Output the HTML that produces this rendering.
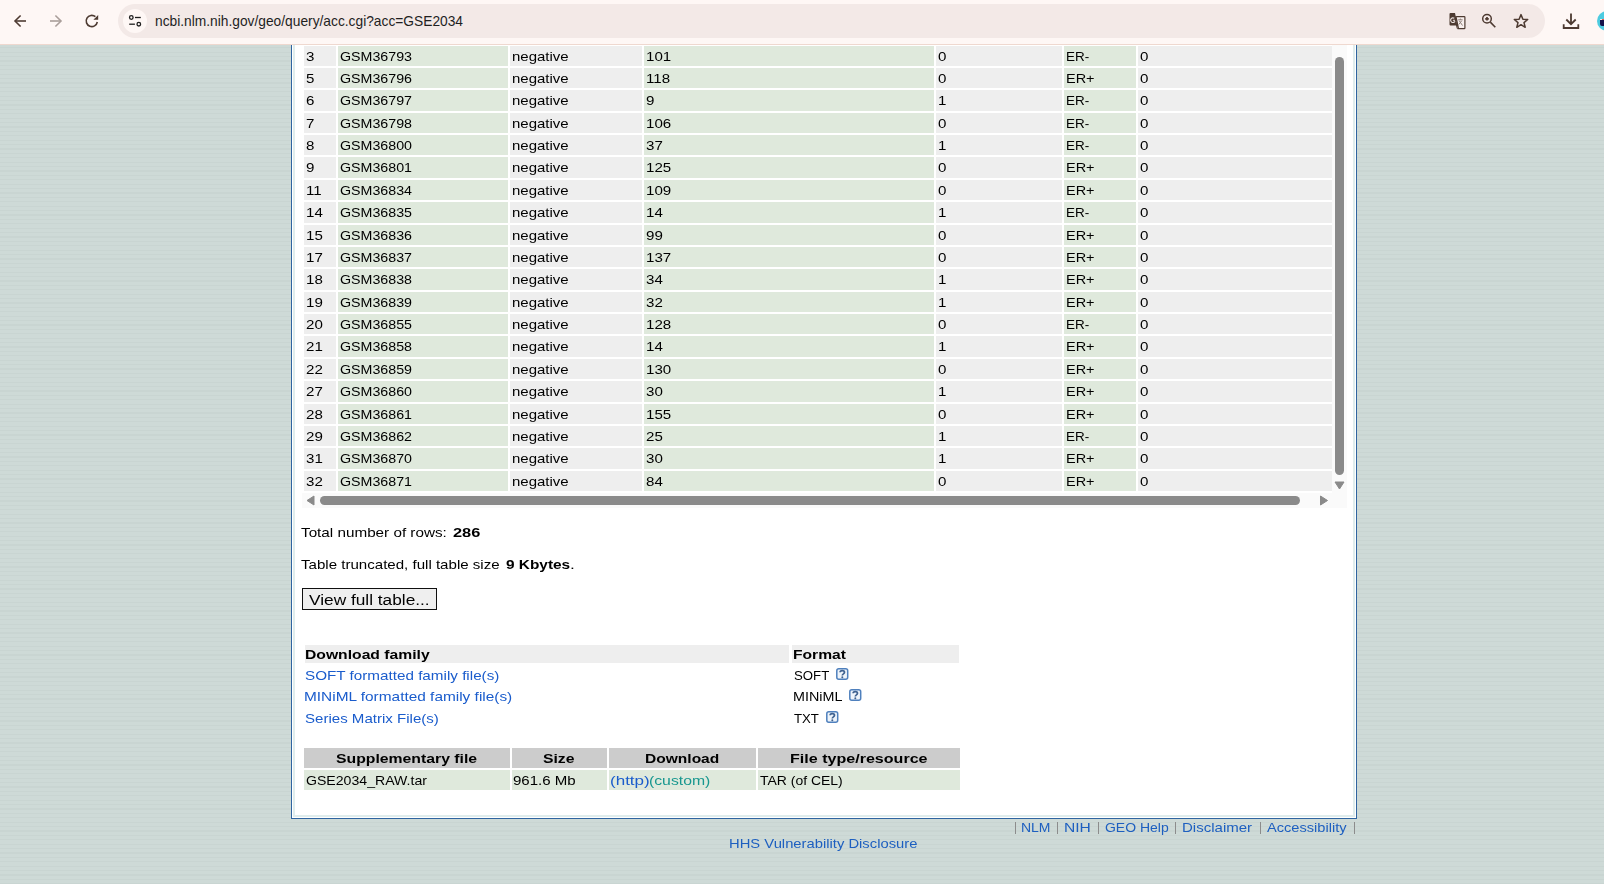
<!DOCTYPE html>
<html><head><meta charset="utf-8"><style>
html,body{margin:0;padding:0;width:1604px;height:884px;overflow:hidden;}
body{position:relative;background-color:#ccd8d5;background-image:repeating-linear-gradient(to bottom,#cedad7 0px,#cedad7 3.1px,#c9d5d2 3.1px,#c9d5d2 4.4px);font-family:"Liberation Sans",sans-serif;}
div,span,svg{position:absolute;}
.t{white-space:pre;line-height:20px;transform-origin:0 0;font-family:"Liberation Sans",sans-serif;}
</style></head><body>
<div style="left:0;top:0;width:1604px;height:884px;will-change:transform"><div style="left:291px;top:45px;width:1066px;height:774px;background:#2f64a0;"></div>
<div style="left:292px;top:45px;width:1064px;height:773px;background:#ffffff;"></div>
<div style="left:293px;top:45px;width:1062px;height:772px;background:#e0eded;"></div>
<div style="left:295px;top:45px;width:1058px;height:770px;background:#ffffff;"></div>
<div style="left:302px;top:45px;width:1045px;height:463px;background:#fafafa;"></div>
<div style="left:302px;top:45px;width:1030px;height:448px;background:#ffffff;"></div>
<div style="left:304px;top:46px;width:32px;height:20px;background:#eeeeee;"></div>
<div style="left:338px;top:46px;width:170px;height:20px;background:#dfe9dc;"></div>
<div style="left:510px;top:46px;width:132px;height:20px;background:#eeeeee;"></div>
<div style="left:644px;top:46px;width:290px;height:20px;background:#dfe9dc;"></div>
<div style="left:936px;top:46px;width:126px;height:20px;background:#eeeeee;"></div>
<div style="left:1064px;top:46px;width:72px;height:20px;background:#dfe9dc;"></div>
<div style="left:1138px;top:46px;width:194px;height:20px;background:#eeeeee;"></div>
<span class="t" style="left:306.40px;top:47px;font-size:13.5px;transform:scaleX(1.1177);color:#000;">3</span>
<span class="t" style="left:340.40px;top:47px;font-size:13.5px;transform:scaleX(1.0547);color:#000;">GSM36793</span>
<span class="t" style="left:512.40px;top:47px;font-size:13.5px;transform:scaleX(1.1096);color:#000;">negative</span>
<span class="t" style="left:646.40px;top:47px;font-size:13.5px;transform:scaleX(1.1177);color:#000;">101</span>
<span class="t" style="left:938.40px;top:47px;font-size:13.5px;transform:scaleX(1.1177);color:#000;">0</span>
<span class="t" style="left:1066.40px;top:47px;font-size:13.5px;transform:scaleX(0.9991);color:#000;">ER-</span>
<span class="t" style="left:1140.40px;top:47px;font-size:13.5px;transform:scaleX(1.1177);color:#000;">0</span>
<div style="left:304px;top:68px;width:32px;height:20px;background:#eeeeee;"></div>
<div style="left:338px;top:68px;width:170px;height:20px;background:#dfe9dc;"></div>
<div style="left:510px;top:68px;width:132px;height:20px;background:#eeeeee;"></div>
<div style="left:644px;top:68px;width:290px;height:20px;background:#dfe9dc;"></div>
<div style="left:936px;top:68px;width:126px;height:20px;background:#eeeeee;"></div>
<div style="left:1064px;top:68px;width:72px;height:20px;background:#dfe9dc;"></div>
<div style="left:1138px;top:68px;width:194px;height:20px;background:#eeeeee;"></div>
<span class="t" style="left:306.40px;top:69px;font-size:13.5px;transform:scaleX(1.1177);color:#000;">5</span>
<span class="t" style="left:340.40px;top:69px;font-size:13.5px;transform:scaleX(1.0547);color:#000;">GSM36796</span>
<span class="t" style="left:512.40px;top:69px;font-size:13.5px;transform:scaleX(1.1096);color:#000;">negative</span>
<span class="t" style="left:646.40px;top:69px;font-size:13.5px;transform:scaleX(1.1177);color:#000;">118</span>
<span class="t" style="left:938.40px;top:69px;font-size:13.5px;transform:scaleX(1.1177);color:#000;">0</span>
<span class="t" style="left:1066.40px;top:69px;font-size:13.5px;transform:scaleX(1.0721);color:#000;">ER+</span>
<span class="t" style="left:1140.40px;top:69px;font-size:13.5px;transform:scaleX(1.1177);color:#000;">0</span>
<div style="left:304px;top:90px;width:32px;height:21px;background:#eeeeee;"></div>
<div style="left:338px;top:90px;width:170px;height:21px;background:#dfe9dc;"></div>
<div style="left:510px;top:90px;width:132px;height:21px;background:#eeeeee;"></div>
<div style="left:644px;top:90px;width:290px;height:21px;background:#dfe9dc;"></div>
<div style="left:936px;top:90px;width:126px;height:21px;background:#eeeeee;"></div>
<div style="left:1064px;top:90px;width:72px;height:21px;background:#dfe9dc;"></div>
<div style="left:1138px;top:90px;width:194px;height:21px;background:#eeeeee;"></div>
<span class="t" style="left:306.40px;top:91px;font-size:13.5px;transform:scaleX(1.1177);color:#000;">6</span>
<span class="t" style="left:340.40px;top:91px;font-size:13.5px;transform:scaleX(1.0547);color:#000;">GSM36797</span>
<span class="t" style="left:512.40px;top:91px;font-size:13.5px;transform:scaleX(1.1096);color:#000;">negative</span>
<span class="t" style="left:646.40px;top:91px;font-size:13.5px;transform:scaleX(1.1177);color:#000;">9</span>
<span class="t" style="left:938.40px;top:91px;font-size:13.5px;transform:scaleX(1.1177);color:#000;">1</span>
<span class="t" style="left:1066.40px;top:91px;font-size:13.5px;transform:scaleX(0.9991);color:#000;">ER-</span>
<span class="t" style="left:1140.40px;top:91px;font-size:13.5px;transform:scaleX(1.1177);color:#000;">0</span>
<div style="left:304px;top:113px;width:32px;height:20px;background:#eeeeee;"></div>
<div style="left:338px;top:113px;width:170px;height:20px;background:#dfe9dc;"></div>
<div style="left:510px;top:113px;width:132px;height:20px;background:#eeeeee;"></div>
<div style="left:644px;top:113px;width:290px;height:20px;background:#dfe9dc;"></div>
<div style="left:936px;top:113px;width:126px;height:20px;background:#eeeeee;"></div>
<div style="left:1064px;top:113px;width:72px;height:20px;background:#dfe9dc;"></div>
<div style="left:1138px;top:113px;width:194px;height:20px;background:#eeeeee;"></div>
<span class="t" style="left:306.40px;top:114px;font-size:13.5px;transform:scaleX(1.1177);color:#000;">7</span>
<span class="t" style="left:340.40px;top:114px;font-size:13.5px;transform:scaleX(1.0547);color:#000;">GSM36798</span>
<span class="t" style="left:512.40px;top:114px;font-size:13.5px;transform:scaleX(1.1096);color:#000;">negative</span>
<span class="t" style="left:646.40px;top:114px;font-size:13.5px;transform:scaleX(1.1177);color:#000;">106</span>
<span class="t" style="left:938.40px;top:114px;font-size:13.5px;transform:scaleX(1.1177);color:#000;">0</span>
<span class="t" style="left:1066.40px;top:114px;font-size:13.5px;transform:scaleX(0.9991);color:#000;">ER-</span>
<span class="t" style="left:1140.40px;top:114px;font-size:13.5px;transform:scaleX(1.1177);color:#000;">0</span>
<div style="left:304px;top:135px;width:32px;height:20px;background:#eeeeee;"></div>
<div style="left:338px;top:135px;width:170px;height:20px;background:#dfe9dc;"></div>
<div style="left:510px;top:135px;width:132px;height:20px;background:#eeeeee;"></div>
<div style="left:644px;top:135px;width:290px;height:20px;background:#dfe9dc;"></div>
<div style="left:936px;top:135px;width:126px;height:20px;background:#eeeeee;"></div>
<div style="left:1064px;top:135px;width:72px;height:20px;background:#dfe9dc;"></div>
<div style="left:1138px;top:135px;width:194px;height:20px;background:#eeeeee;"></div>
<span class="t" style="left:306.40px;top:136px;font-size:13.5px;transform:scaleX(1.1177);color:#000;">8</span>
<span class="t" style="left:340.40px;top:136px;font-size:13.5px;transform:scaleX(1.0547);color:#000;">GSM36800</span>
<span class="t" style="left:512.40px;top:136px;font-size:13.5px;transform:scaleX(1.1096);color:#000;">negative</span>
<span class="t" style="left:646.40px;top:136px;font-size:13.5px;transform:scaleX(1.1177);color:#000;">37</span>
<span class="t" style="left:938.40px;top:136px;font-size:13.5px;transform:scaleX(1.1177);color:#000;">1</span>
<span class="t" style="left:1066.40px;top:136px;font-size:13.5px;transform:scaleX(0.9991);color:#000;">ER-</span>
<span class="t" style="left:1140.40px;top:136px;font-size:13.5px;transform:scaleX(1.1177);color:#000;">0</span>
<div style="left:304px;top:157px;width:32px;height:21px;background:#eeeeee;"></div>
<div style="left:338px;top:157px;width:170px;height:21px;background:#dfe9dc;"></div>
<div style="left:510px;top:157px;width:132px;height:21px;background:#eeeeee;"></div>
<div style="left:644px;top:157px;width:290px;height:21px;background:#dfe9dc;"></div>
<div style="left:936px;top:157px;width:126px;height:21px;background:#eeeeee;"></div>
<div style="left:1064px;top:157px;width:72px;height:21px;background:#dfe9dc;"></div>
<div style="left:1138px;top:157px;width:194px;height:21px;background:#eeeeee;"></div>
<span class="t" style="left:306.40px;top:158px;font-size:13.5px;transform:scaleX(1.1177);color:#000;">9</span>
<span class="t" style="left:340.40px;top:158px;font-size:13.5px;transform:scaleX(1.0547);color:#000;">GSM36801</span>
<span class="t" style="left:512.40px;top:158px;font-size:13.5px;transform:scaleX(1.1096);color:#000;">negative</span>
<span class="t" style="left:646.40px;top:158px;font-size:13.5px;transform:scaleX(1.1177);color:#000;">125</span>
<span class="t" style="left:938.40px;top:158px;font-size:13.5px;transform:scaleX(1.1177);color:#000;">0</span>
<span class="t" style="left:1066.40px;top:158px;font-size:13.5px;transform:scaleX(1.0721);color:#000;">ER+</span>
<span class="t" style="left:1140.40px;top:158px;font-size:13.5px;transform:scaleX(1.1177);color:#000;">0</span>
<div style="left:304px;top:180px;width:32px;height:20px;background:#eeeeee;"></div>
<div style="left:338px;top:180px;width:170px;height:20px;background:#dfe9dc;"></div>
<div style="left:510px;top:180px;width:132px;height:20px;background:#eeeeee;"></div>
<div style="left:644px;top:180px;width:290px;height:20px;background:#dfe9dc;"></div>
<div style="left:936px;top:180px;width:126px;height:20px;background:#eeeeee;"></div>
<div style="left:1064px;top:180px;width:72px;height:20px;background:#dfe9dc;"></div>
<div style="left:1138px;top:180px;width:194px;height:20px;background:#eeeeee;"></div>
<span class="t" style="left:306.40px;top:181px;font-size:13.5px;transform:scaleX(1.1177);color:#000;">11</span>
<span class="t" style="left:340.40px;top:181px;font-size:13.5px;transform:scaleX(1.0547);color:#000;">GSM36834</span>
<span class="t" style="left:512.40px;top:181px;font-size:13.5px;transform:scaleX(1.1096);color:#000;">negative</span>
<span class="t" style="left:646.40px;top:181px;font-size:13.5px;transform:scaleX(1.1177);color:#000;">109</span>
<span class="t" style="left:938.40px;top:181px;font-size:13.5px;transform:scaleX(1.1177);color:#000;">0</span>
<span class="t" style="left:1066.40px;top:181px;font-size:13.5px;transform:scaleX(1.0721);color:#000;">ER+</span>
<span class="t" style="left:1140.40px;top:181px;font-size:13.5px;transform:scaleX(1.1177);color:#000;">0</span>
<div style="left:304px;top:202px;width:32px;height:21px;background:#eeeeee;"></div>
<div style="left:338px;top:202px;width:170px;height:21px;background:#dfe9dc;"></div>
<div style="left:510px;top:202px;width:132px;height:21px;background:#eeeeee;"></div>
<div style="left:644px;top:202px;width:290px;height:21px;background:#dfe9dc;"></div>
<div style="left:936px;top:202px;width:126px;height:21px;background:#eeeeee;"></div>
<div style="left:1064px;top:202px;width:72px;height:21px;background:#dfe9dc;"></div>
<div style="left:1138px;top:202px;width:194px;height:21px;background:#eeeeee;"></div>
<span class="t" style="left:306.40px;top:203px;font-size:13.5px;transform:scaleX(1.1177);color:#000;">14</span>
<span class="t" style="left:340.40px;top:203px;font-size:13.5px;transform:scaleX(1.0547);color:#000;">GSM36835</span>
<span class="t" style="left:512.40px;top:203px;font-size:13.5px;transform:scaleX(1.1096);color:#000;">negative</span>
<span class="t" style="left:646.40px;top:203px;font-size:13.5px;transform:scaleX(1.1177);color:#000;">14</span>
<span class="t" style="left:938.40px;top:203px;font-size:13.5px;transform:scaleX(1.1177);color:#000;">1</span>
<span class="t" style="left:1066.40px;top:203px;font-size:13.5px;transform:scaleX(0.9991);color:#000;">ER-</span>
<span class="t" style="left:1140.40px;top:203px;font-size:13.5px;transform:scaleX(1.1177);color:#000;">0</span>
<div style="left:304px;top:225px;width:32px;height:20px;background:#eeeeee;"></div>
<div style="left:338px;top:225px;width:170px;height:20px;background:#dfe9dc;"></div>
<div style="left:510px;top:225px;width:132px;height:20px;background:#eeeeee;"></div>
<div style="left:644px;top:225px;width:290px;height:20px;background:#dfe9dc;"></div>
<div style="left:936px;top:225px;width:126px;height:20px;background:#eeeeee;"></div>
<div style="left:1064px;top:225px;width:72px;height:20px;background:#dfe9dc;"></div>
<div style="left:1138px;top:225px;width:194px;height:20px;background:#eeeeee;"></div>
<span class="t" style="left:306.40px;top:226px;font-size:13.5px;transform:scaleX(1.1177);color:#000;">15</span>
<span class="t" style="left:340.40px;top:226px;font-size:13.5px;transform:scaleX(1.0547);color:#000;">GSM36836</span>
<span class="t" style="left:512.40px;top:226px;font-size:13.5px;transform:scaleX(1.1096);color:#000;">negative</span>
<span class="t" style="left:646.40px;top:226px;font-size:13.5px;transform:scaleX(1.1177);color:#000;">99</span>
<span class="t" style="left:938.40px;top:226px;font-size:13.5px;transform:scaleX(1.1177);color:#000;">0</span>
<span class="t" style="left:1066.40px;top:226px;font-size:13.5px;transform:scaleX(1.0721);color:#000;">ER+</span>
<span class="t" style="left:1140.40px;top:226px;font-size:13.5px;transform:scaleX(1.1177);color:#000;">0</span>
<div style="left:304px;top:247px;width:32px;height:20px;background:#eeeeee;"></div>
<div style="left:338px;top:247px;width:170px;height:20px;background:#dfe9dc;"></div>
<div style="left:510px;top:247px;width:132px;height:20px;background:#eeeeee;"></div>
<div style="left:644px;top:247px;width:290px;height:20px;background:#dfe9dc;"></div>
<div style="left:936px;top:247px;width:126px;height:20px;background:#eeeeee;"></div>
<div style="left:1064px;top:247px;width:72px;height:20px;background:#dfe9dc;"></div>
<div style="left:1138px;top:247px;width:194px;height:20px;background:#eeeeee;"></div>
<span class="t" style="left:306.40px;top:248px;font-size:13.5px;transform:scaleX(1.1177);color:#000;">17</span>
<span class="t" style="left:340.40px;top:248px;font-size:13.5px;transform:scaleX(1.0547);color:#000;">GSM36837</span>
<span class="t" style="left:512.40px;top:248px;font-size:13.5px;transform:scaleX(1.1096);color:#000;">negative</span>
<span class="t" style="left:646.40px;top:248px;font-size:13.5px;transform:scaleX(1.1177);color:#000;">137</span>
<span class="t" style="left:938.40px;top:248px;font-size:13.5px;transform:scaleX(1.1177);color:#000;">0</span>
<span class="t" style="left:1066.40px;top:248px;font-size:13.5px;transform:scaleX(1.0721);color:#000;">ER+</span>
<span class="t" style="left:1140.40px;top:248px;font-size:13.5px;transform:scaleX(1.1177);color:#000;">0</span>
<div style="left:304px;top:269px;width:32px;height:21px;background:#eeeeee;"></div>
<div style="left:338px;top:269px;width:170px;height:21px;background:#dfe9dc;"></div>
<div style="left:510px;top:269px;width:132px;height:21px;background:#eeeeee;"></div>
<div style="left:644px;top:269px;width:290px;height:21px;background:#dfe9dc;"></div>
<div style="left:936px;top:269px;width:126px;height:21px;background:#eeeeee;"></div>
<div style="left:1064px;top:269px;width:72px;height:21px;background:#dfe9dc;"></div>
<div style="left:1138px;top:269px;width:194px;height:21px;background:#eeeeee;"></div>
<span class="t" style="left:306.40px;top:270px;font-size:13.5px;transform:scaleX(1.1177);color:#000;">18</span>
<span class="t" style="left:340.40px;top:270px;font-size:13.5px;transform:scaleX(1.0547);color:#000;">GSM36838</span>
<span class="t" style="left:512.40px;top:270px;font-size:13.5px;transform:scaleX(1.1096);color:#000;">negative</span>
<span class="t" style="left:646.40px;top:270px;font-size:13.5px;transform:scaleX(1.1177);color:#000;">34</span>
<span class="t" style="left:938.40px;top:270px;font-size:13.5px;transform:scaleX(1.1177);color:#000;">1</span>
<span class="t" style="left:1066.40px;top:270px;font-size:13.5px;transform:scaleX(1.0721);color:#000;">ER+</span>
<span class="t" style="left:1140.40px;top:270px;font-size:13.5px;transform:scaleX(1.1177);color:#000;">0</span>
<div style="left:304px;top:292px;width:32px;height:20px;background:#eeeeee;"></div>
<div style="left:338px;top:292px;width:170px;height:20px;background:#dfe9dc;"></div>
<div style="left:510px;top:292px;width:132px;height:20px;background:#eeeeee;"></div>
<div style="left:644px;top:292px;width:290px;height:20px;background:#dfe9dc;"></div>
<div style="left:936px;top:292px;width:126px;height:20px;background:#eeeeee;"></div>
<div style="left:1064px;top:292px;width:72px;height:20px;background:#dfe9dc;"></div>
<div style="left:1138px;top:292px;width:194px;height:20px;background:#eeeeee;"></div>
<span class="t" style="left:306.40px;top:293px;font-size:13.5px;transform:scaleX(1.1177);color:#000;">19</span>
<span class="t" style="left:340.40px;top:293px;font-size:13.5px;transform:scaleX(1.0547);color:#000;">GSM36839</span>
<span class="t" style="left:512.40px;top:293px;font-size:13.5px;transform:scaleX(1.1096);color:#000;">negative</span>
<span class="t" style="left:646.40px;top:293px;font-size:13.5px;transform:scaleX(1.1177);color:#000;">32</span>
<span class="t" style="left:938.40px;top:293px;font-size:13.5px;transform:scaleX(1.1177);color:#000;">1</span>
<span class="t" style="left:1066.40px;top:293px;font-size:13.5px;transform:scaleX(1.0721);color:#000;">ER+</span>
<span class="t" style="left:1140.40px;top:293px;font-size:13.5px;transform:scaleX(1.1177);color:#000;">0</span>
<div style="left:304px;top:314px;width:32px;height:20px;background:#eeeeee;"></div>
<div style="left:338px;top:314px;width:170px;height:20px;background:#dfe9dc;"></div>
<div style="left:510px;top:314px;width:132px;height:20px;background:#eeeeee;"></div>
<div style="left:644px;top:314px;width:290px;height:20px;background:#dfe9dc;"></div>
<div style="left:936px;top:314px;width:126px;height:20px;background:#eeeeee;"></div>
<div style="left:1064px;top:314px;width:72px;height:20px;background:#dfe9dc;"></div>
<div style="left:1138px;top:314px;width:194px;height:20px;background:#eeeeee;"></div>
<span class="t" style="left:306.40px;top:315px;font-size:13.5px;transform:scaleX(1.1177);color:#000;">20</span>
<span class="t" style="left:340.40px;top:315px;font-size:13.5px;transform:scaleX(1.0547);color:#000;">GSM36855</span>
<span class="t" style="left:512.40px;top:315px;font-size:13.5px;transform:scaleX(1.1096);color:#000;">negative</span>
<span class="t" style="left:646.40px;top:315px;font-size:13.5px;transform:scaleX(1.1177);color:#000;">128</span>
<span class="t" style="left:938.40px;top:315px;font-size:13.5px;transform:scaleX(1.1177);color:#000;">0</span>
<span class="t" style="left:1066.40px;top:315px;font-size:13.5px;transform:scaleX(0.9991);color:#000;">ER-</span>
<span class="t" style="left:1140.40px;top:315px;font-size:13.5px;transform:scaleX(1.1177);color:#000;">0</span>
<div style="left:304px;top:336px;width:32px;height:21px;background:#eeeeee;"></div>
<div style="left:338px;top:336px;width:170px;height:21px;background:#dfe9dc;"></div>
<div style="left:510px;top:336px;width:132px;height:21px;background:#eeeeee;"></div>
<div style="left:644px;top:336px;width:290px;height:21px;background:#dfe9dc;"></div>
<div style="left:936px;top:336px;width:126px;height:21px;background:#eeeeee;"></div>
<div style="left:1064px;top:336px;width:72px;height:21px;background:#dfe9dc;"></div>
<div style="left:1138px;top:336px;width:194px;height:21px;background:#eeeeee;"></div>
<span class="t" style="left:306.40px;top:337px;font-size:13.5px;transform:scaleX(1.1177);color:#000;">21</span>
<span class="t" style="left:340.40px;top:337px;font-size:13.5px;transform:scaleX(1.0547);color:#000;">GSM36858</span>
<span class="t" style="left:512.40px;top:337px;font-size:13.5px;transform:scaleX(1.1096);color:#000;">negative</span>
<span class="t" style="left:646.40px;top:337px;font-size:13.5px;transform:scaleX(1.1177);color:#000;">14</span>
<span class="t" style="left:938.40px;top:337px;font-size:13.5px;transform:scaleX(1.1177);color:#000;">1</span>
<span class="t" style="left:1066.40px;top:337px;font-size:13.5px;transform:scaleX(1.0721);color:#000;">ER+</span>
<span class="t" style="left:1140.40px;top:337px;font-size:13.5px;transform:scaleX(1.1177);color:#000;">0</span>
<div style="left:304px;top:359px;width:32px;height:20px;background:#eeeeee;"></div>
<div style="left:338px;top:359px;width:170px;height:20px;background:#dfe9dc;"></div>
<div style="left:510px;top:359px;width:132px;height:20px;background:#eeeeee;"></div>
<div style="left:644px;top:359px;width:290px;height:20px;background:#dfe9dc;"></div>
<div style="left:936px;top:359px;width:126px;height:20px;background:#eeeeee;"></div>
<div style="left:1064px;top:359px;width:72px;height:20px;background:#dfe9dc;"></div>
<div style="left:1138px;top:359px;width:194px;height:20px;background:#eeeeee;"></div>
<span class="t" style="left:306.40px;top:360px;font-size:13.5px;transform:scaleX(1.1177);color:#000;">22</span>
<span class="t" style="left:340.40px;top:360px;font-size:13.5px;transform:scaleX(1.0547);color:#000;">GSM36859</span>
<span class="t" style="left:512.40px;top:360px;font-size:13.5px;transform:scaleX(1.1096);color:#000;">negative</span>
<span class="t" style="left:646.40px;top:360px;font-size:13.5px;transform:scaleX(1.1177);color:#000;">130</span>
<span class="t" style="left:938.40px;top:360px;font-size:13.5px;transform:scaleX(1.1177);color:#000;">0</span>
<span class="t" style="left:1066.40px;top:360px;font-size:13.5px;transform:scaleX(1.0721);color:#000;">ER+</span>
<span class="t" style="left:1140.40px;top:360px;font-size:13.5px;transform:scaleX(1.1177);color:#000;">0</span>
<div style="left:304px;top:381px;width:32px;height:21px;background:#eeeeee;"></div>
<div style="left:338px;top:381px;width:170px;height:21px;background:#dfe9dc;"></div>
<div style="left:510px;top:381px;width:132px;height:21px;background:#eeeeee;"></div>
<div style="left:644px;top:381px;width:290px;height:21px;background:#dfe9dc;"></div>
<div style="left:936px;top:381px;width:126px;height:21px;background:#eeeeee;"></div>
<div style="left:1064px;top:381px;width:72px;height:21px;background:#dfe9dc;"></div>
<div style="left:1138px;top:381px;width:194px;height:21px;background:#eeeeee;"></div>
<span class="t" style="left:306.40px;top:382px;font-size:13.5px;transform:scaleX(1.1177);color:#000;">27</span>
<span class="t" style="left:340.40px;top:382px;font-size:13.5px;transform:scaleX(1.0547);color:#000;">GSM36860</span>
<span class="t" style="left:512.40px;top:382px;font-size:13.5px;transform:scaleX(1.1096);color:#000;">negative</span>
<span class="t" style="left:646.40px;top:382px;font-size:13.5px;transform:scaleX(1.1177);color:#000;">30</span>
<span class="t" style="left:938.40px;top:382px;font-size:13.5px;transform:scaleX(1.1177);color:#000;">1</span>
<span class="t" style="left:1066.40px;top:382px;font-size:13.5px;transform:scaleX(1.0721);color:#000;">ER+</span>
<span class="t" style="left:1140.40px;top:382px;font-size:13.5px;transform:scaleX(1.1177);color:#000;">0</span>
<div style="left:304px;top:404px;width:32px;height:20px;background:#eeeeee;"></div>
<div style="left:338px;top:404px;width:170px;height:20px;background:#dfe9dc;"></div>
<div style="left:510px;top:404px;width:132px;height:20px;background:#eeeeee;"></div>
<div style="left:644px;top:404px;width:290px;height:20px;background:#dfe9dc;"></div>
<div style="left:936px;top:404px;width:126px;height:20px;background:#eeeeee;"></div>
<div style="left:1064px;top:404px;width:72px;height:20px;background:#dfe9dc;"></div>
<div style="left:1138px;top:404px;width:194px;height:20px;background:#eeeeee;"></div>
<span class="t" style="left:306.40px;top:405px;font-size:13.5px;transform:scaleX(1.1177);color:#000;">28</span>
<span class="t" style="left:340.40px;top:405px;font-size:13.5px;transform:scaleX(1.0547);color:#000;">GSM36861</span>
<span class="t" style="left:512.40px;top:405px;font-size:13.5px;transform:scaleX(1.1096);color:#000;">negative</span>
<span class="t" style="left:646.40px;top:405px;font-size:13.5px;transform:scaleX(1.1177);color:#000;">155</span>
<span class="t" style="left:938.40px;top:405px;font-size:13.5px;transform:scaleX(1.1177);color:#000;">0</span>
<span class="t" style="left:1066.40px;top:405px;font-size:13.5px;transform:scaleX(1.0721);color:#000;">ER+</span>
<span class="t" style="left:1140.40px;top:405px;font-size:13.5px;transform:scaleX(1.1177);color:#000;">0</span>
<div style="left:304px;top:426px;width:32px;height:20px;background:#eeeeee;"></div>
<div style="left:338px;top:426px;width:170px;height:20px;background:#dfe9dc;"></div>
<div style="left:510px;top:426px;width:132px;height:20px;background:#eeeeee;"></div>
<div style="left:644px;top:426px;width:290px;height:20px;background:#dfe9dc;"></div>
<div style="left:936px;top:426px;width:126px;height:20px;background:#eeeeee;"></div>
<div style="left:1064px;top:426px;width:72px;height:20px;background:#dfe9dc;"></div>
<div style="left:1138px;top:426px;width:194px;height:20px;background:#eeeeee;"></div>
<span class="t" style="left:306.40px;top:427px;font-size:13.5px;transform:scaleX(1.1177);color:#000;">29</span>
<span class="t" style="left:340.40px;top:427px;font-size:13.5px;transform:scaleX(1.0547);color:#000;">GSM36862</span>
<span class="t" style="left:512.40px;top:427px;font-size:13.5px;transform:scaleX(1.1096);color:#000;">negative</span>
<span class="t" style="left:646.40px;top:427px;font-size:13.5px;transform:scaleX(1.1177);color:#000;">25</span>
<span class="t" style="left:938.40px;top:427px;font-size:13.5px;transform:scaleX(1.1177);color:#000;">1</span>
<span class="t" style="left:1066.40px;top:427px;font-size:13.5px;transform:scaleX(0.9991);color:#000;">ER-</span>
<span class="t" style="left:1140.40px;top:427px;font-size:13.5px;transform:scaleX(1.1177);color:#000;">0</span>
<div style="left:304px;top:448px;width:32px;height:21px;background:#eeeeee;"></div>
<div style="left:338px;top:448px;width:170px;height:21px;background:#dfe9dc;"></div>
<div style="left:510px;top:448px;width:132px;height:21px;background:#eeeeee;"></div>
<div style="left:644px;top:448px;width:290px;height:21px;background:#dfe9dc;"></div>
<div style="left:936px;top:448px;width:126px;height:21px;background:#eeeeee;"></div>
<div style="left:1064px;top:448px;width:72px;height:21px;background:#dfe9dc;"></div>
<div style="left:1138px;top:448px;width:194px;height:21px;background:#eeeeee;"></div>
<span class="t" style="left:306.40px;top:449px;font-size:13.5px;transform:scaleX(1.1177);color:#000;">31</span>
<span class="t" style="left:340.40px;top:449px;font-size:13.5px;transform:scaleX(1.0547);color:#000;">GSM36870</span>
<span class="t" style="left:512.40px;top:449px;font-size:13.5px;transform:scaleX(1.1096);color:#000;">negative</span>
<span class="t" style="left:646.40px;top:449px;font-size:13.5px;transform:scaleX(1.1177);color:#000;">30</span>
<span class="t" style="left:938.40px;top:449px;font-size:13.5px;transform:scaleX(1.1177);color:#000;">1</span>
<span class="t" style="left:1066.40px;top:449px;font-size:13.5px;transform:scaleX(1.0721);color:#000;">ER+</span>
<span class="t" style="left:1140.40px;top:449px;font-size:13.5px;transform:scaleX(1.1177);color:#000;">0</span>
<div style="left:304px;top:471px;width:32px;height:20px;background:#eeeeee;"></div>
<div style="left:338px;top:471px;width:170px;height:20px;background:#dfe9dc;"></div>
<div style="left:510px;top:471px;width:132px;height:20px;background:#eeeeee;"></div>
<div style="left:644px;top:471px;width:290px;height:20px;background:#dfe9dc;"></div>
<div style="left:936px;top:471px;width:126px;height:20px;background:#eeeeee;"></div>
<div style="left:1064px;top:471px;width:72px;height:20px;background:#dfe9dc;"></div>
<div style="left:1138px;top:471px;width:194px;height:20px;background:#eeeeee;"></div>
<span class="t" style="left:306.40px;top:472px;font-size:13.5px;transform:scaleX(1.1177);color:#000;">32</span>
<span class="t" style="left:340.40px;top:472px;font-size:13.5px;transform:scaleX(1.0547);color:#000;">GSM36871</span>
<span class="t" style="left:512.40px;top:472px;font-size:13.5px;transform:scaleX(1.1096);color:#000;">negative</span>
<span class="t" style="left:646.40px;top:472px;font-size:13.5px;transform:scaleX(1.1177);color:#000;">84</span>
<span class="t" style="left:938.40px;top:472px;font-size:13.5px;transform:scaleX(1.1177);color:#000;">0</span>
<span class="t" style="left:1066.40px;top:472px;font-size:13.5px;transform:scaleX(1.0721);color:#000;">ER+</span>
<span class="t" style="left:1140.40px;top:472px;font-size:13.5px;transform:scaleX(1.1177);color:#000;">0</span>
<div style="left:1335px;top:57px;width:9px;height:418px;background:#8a8a8a;border-radius:4.5px"></div>
<div style="left:320px;top:496px;width:980px;height:9px;background:#8a8a8a;border-radius:4.5px"></div>
<svg style="position:absolute;left:0;top:0" width="1604" height="884"><path d="M1335 482 L1344 482 L1339.5 489 Z" fill="#8a8a8a" stroke="#8a8a8a" stroke-width="1" stroke-linejoin="round"/><path d="M314 496 L314 505 L307 500.5 Z" fill="#8a8a8a" stroke="#8a8a8a" stroke-width="1" stroke-linejoin="round"/><path d="M1320.5 496 L1320.5 505 L1327.5 500.5 Z" fill="#8a8a8a" stroke="#8a8a8a" stroke-width="1" stroke-linejoin="round"/></svg>
<span class="t" style="left:301.26px;top:523px;font-size:13.5px;transform:scaleX(1.1299);color:#000;">Total number of rows:</span>
<span class="t" style="left:453.13px;top:523px;font-size:13.5px;font-weight:bold;transform:scaleX(1.2147);color:#000;">286</span>
<span class="t" style="left:301.26px;top:555px;font-size:13.5px;transform:scaleX(1.1168);color:#000;">Table truncated, full table size</span>
<span class="t" style="left:505.87px;top:555px;font-size:13.5px;font-weight:bold;transform:scaleX(1.1402);color:#000;">9 Kbytes</span>
<span class="t" style="left:569.92px;top:555px;font-size:13.5px;transform:scaleX(1.2802);color:#000;">.</span>
<div style="left:302px;top:588px;width:133px;height:20px;background:#efefef;border:1px solid #101010"></div>
<span class="t" style="left:309.02px;top:590px;font-size:15.5px;transform:scaleX(1.1142);color:#000;">View full table...</span>
<div style="left:305px;top:645px;width:484px;height:18px;background:#eeeeee;"></div>
<div style="left:792px;top:645px;width:167px;height:18px;background:#eeeeee;"></div>
<span class="t" style="left:305.15px;top:645px;font-size:13.5px;font-weight:bold;transform:scaleX(1.1620);color:#000;">Download family</span>
<span class="t" style="left:793.26px;top:645px;font-size:13.5px;font-weight:bold;transform:scaleX(1.1570);color:#000;">Format</span>
<span class="t" style="left:305.01px;top:666px;font-size:13.5px;transform:scaleX(1.1281);color:#1a5ccc;">SOFT formatted family file(s)</span>
<span class="t" style="left:304.44px;top:687px;font-size:13.5px;transform:scaleX(1.1409);color:#1a5ccc;">MINiML formatted family file(s)</span>
<span class="t" style="left:305.02px;top:709px;font-size:13.5px;transform:scaleX(1.1150);color:#1a5ccc;">Series Matrix File(s)</span>
<span class="t" style="left:793.70px;top:666px;font-size:13.5px;transform:scaleX(0.9779);color:#000;">SOFT</span>
<span class="t" style="left:793.12px;top:687px;font-size:13.5px;transform:scaleX(1.0613);color:#000;">MINiML</span>
<span class="t" style="left:794.00px;top:709px;font-size:13.5px;transform:scaleX(0.9765);color:#000;">TXT</span>
<svg style="left:836px;top:668px" width="13" height="12" viewBox="0 0 13 12"><rect x="0.8" y="0.8" width="10.9" height="10.4" rx="2" fill="#eef4fa" stroke="#4f80bd" stroke-width="1.5"/><path d="M4.1 4.3 C4.1 2.1 8.5 2.1 8.5 4.3 C8.5 5.8 6.3 5.9 6.3 7.5" fill="none" stroke="#3f6290" stroke-width="1.7"/><circle cx="6.3" cy="9.3" r="1.0" fill="#3f6290"/></svg>
<svg style="left:849px;top:689px" width="13" height="12" viewBox="0 0 13 12"><rect x="0.8" y="0.8" width="10.9" height="10.4" rx="2" fill="#eef4fa" stroke="#4f80bd" stroke-width="1.5"/><path d="M4.1 4.3 C4.1 2.1 8.5 2.1 8.5 4.3 C8.5 5.8 6.3 5.9 6.3 7.5" fill="none" stroke="#3f6290" stroke-width="1.7"/><circle cx="6.3" cy="9.3" r="1.0" fill="#3f6290"/></svg>
<svg style="left:826px;top:711px" width="13" height="12" viewBox="0 0 13 12"><rect x="0.8" y="0.8" width="10.9" height="10.4" rx="2" fill="#eef4fa" stroke="#4f80bd" stroke-width="1.5"/><path d="M4.1 4.3 C4.1 2.1 8.5 2.1 8.5 4.3 C8.5 5.8 6.3 5.9 6.3 7.5" fill="none" stroke="#3f6290" stroke-width="1.7"/><circle cx="6.3" cy="9.3" r="1.0" fill="#3f6290"/></svg>
<div style="left:304px;top:748px;width:206px;height:20px;background:#cccccc;"></div>
<div style="left:304px;top:770px;width:206px;height:20px;background:#dfe9dc;"></div>
<div style="left:512px;top:748px;width:95px;height:20px;background:#cccccc;"></div>
<div style="left:512px;top:770px;width:95px;height:20px;background:#dfe9dc;"></div>
<div style="left:609px;top:748px;width:147px;height:20px;background:#cccccc;"></div>
<div style="left:609px;top:770px;width:147px;height:20px;background:#dfe9dc;"></div>
<div style="left:758px;top:748px;width:202px;height:20px;background:#cccccc;"></div>
<div style="left:758px;top:770px;width:202px;height:20px;background:#dfe9dc;"></div>
<span class="t" style="left:336.05px;top:749px;font-size:13.5px;font-weight:bold;transform:scaleX(1.1682);color:#000;">Supplementary file</span>
<span class="t" style="left:543.35px;top:749px;font-size:13.5px;font-weight:bold;transform:scaleX(1.1658);color:#000;">Size</span>
<span class="t" style="left:645.06px;top:749px;font-size:13.5px;font-weight:bold;transform:scaleX(1.1515);color:#000;">Download</span>
<span class="t" style="left:789.93px;top:749px;font-size:13.5px;font-weight:bold;transform:scaleX(1.1902);color:#000;">File type/resource</span>
<span class="t" style="left:305.69px;top:771px;font-size:13.5px;transform:scaleX(1.0444);color:#000;">GSE2034_RAW.tar</span>
<span class="t" style="left:513.19px;top:771px;font-size:13.5px;transform:scaleX(1.1146);color:#000;">961.6 Mb</span>
<span class="t" style="left:610.44px;top:771px;font-size:13.5px;transform:scaleX(1.2603);color:#1a5ccc;">(http)</span>
<span class="t" style="left:648.62px;top:771px;font-size:13.5px;transform:scaleX(1.1666);color:#17978f;">(custom)</span>
<span class="t" style="left:760.49px;top:771px;font-size:13.5px;transform:scaleX(1.0341);color:#000;">TAR (of CEL)</span>
<div style="left:1014.5px;top:822px;width:1px;height:12px;background:#8c8c8c"></div>
<div style="left:1057.2px;top:822px;width:1px;height:12px;background:#8c8c8c"></div>
<div style="left:1097.5px;top:822px;width:1px;height:12px;background:#8c8c8c"></div>
<div style="left:1175.3px;top:822px;width:1px;height:12px;background:#8c8c8c"></div>
<div style="left:1259.5px;top:822px;width:1px;height:12px;background:#8c8c8c"></div>
<div style="left:1354.1px;top:822px;width:1px;height:12px;background:#8c8c8c"></div>
<span class="t" style="left:1021.25px;top:818px;font-size:13.5px;transform:scaleX(1.0347);color:#1d5fc0;">NLM</span>
<span class="t" style="left:1064.42px;top:818px;font-size:13.5px;transform:scaleX(1.1549);color:#1d5fc0;">NIH</span>
<span class="t" style="left:1104.90px;top:818px;font-size:13.5px;transform:scaleX(1.0352);color:#1d5fc0;">GEO Help</span>
<span class="t" style="left:1182.17px;top:818px;font-size:13.5px;transform:scaleX(1.1123);color:#1d5fc0;">Disclaimer</span>
<span class="t" style="left:1266.97px;top:818px;font-size:13.5px;transform:scaleX(1.0821);color:#1d5fc0;">Accessibility</span>
<span class="t" style="left:729.29px;top:834px;font-size:13.5px;transform:scaleX(1.0951);color:#1d5fc0;">HHS Vulnerability Disclosure</span></div>

<div style="left:0;top:0;width:1604px;height:44px;background:#fef7f5"></div>
<div style="left:0;top:44px;width:1604px;height:1px;background:#efd8cf"></div>
<div style="left:118px;top:4px;width:1427px;height:33.5px;background:#f3e9e7;border-radius:17px"></div>
<div style="left:123px;top:9px;width:24px;height:24px;background:#fef7f5;border-radius:12px"></div>
<svg style="position:absolute;left:0;top:0" width="1604" height="44" fill="none" stroke="#4d3a31" stroke-width="1.6" stroke-linejoin="miter">
  <path d="M26 21 H15.5"/>
  <path d="M20.6 15.5 L15 21 L20.6 26.5"/>
  <path d="M50 21 H60.5" stroke="#a99e9a"/>
  <path d="M55.4 15.5 L61 21 L55.4 26.5" stroke="#a99e9a"/>
  <path d="M95.4 16.7 A5.6 5.6 0 1 0 97.3 22" />
  <path d="M93.4 19.8 L98.2 19.8 L98.2 15 Z" fill="#4d3a31" stroke="none"/>
  <g stroke="#1f1f1f" stroke-width="1.3">
  <circle cx="131.3" cy="17.5" r="1.8"/>
  <path d="M135 17.5 H140.8"/>
  <circle cx="138.8" cy="24.2" r="1.8"/>
  <path d="M129.2 24.2 H134.9"/>
  </g>
  <circle cx="1487" cy="18.8" r="4.3" stroke-width="1.45"/>
  <path d="M1490.3 22.1 L1495.3 27.2" stroke-width="1.6"/>
  <path d="M1487 17 V20.6 M1485.2 18.8 H1488.8" stroke-width="1.7"/>
  <path d="M1521 14.6 L1522.9 19.2 L1527.7 19.5 L1524.0 22.6 L1525.2 27.3 L1521 24.7 L1516.8 27.3 L1518.0 22.6 L1514.3 19.5 L1519.1 19.2 Z" stroke-width="1.5" stroke-linejoin="round"/>
  <path d="M1571 13.5 V24 M1566.3 19.5 L1571 24.2 L1575.7 19.5 M1563.7 24.2 V28 H1578.3 V24.2" stroke-width="1.8"/>
  <path d="M1449.5 14 Q1449.5 13 1450.5 13 H1455 L1458.3 28.6 H1456.8 L1456 25.6 H1450.5 Q1449.5 25.6 1449.5 24.6 Z" fill="#4d3a31" stroke="none"/>
  <path d="M1456.2 16.6 H1464.2 Q1464.9 16.6 1464.9 17.3 V27.9 Q1464.9 28.6 1464.2 28.6 H1457.5" stroke-width="1.2" fill="#f8f0ee"/>
  <path d="M1455.8 16.2 L1458.4 28.6" stroke-width="1.4"/>
  <path d="M1455.0 21.2 A2.3 2.3 0 1 1 1454.3 18.3" stroke="#ece2df" stroke-width="1.1"/>
  <path d="M1452.9 20.3 H1455" stroke="#ece2df" stroke-width="1"/>
  <path d="M1458.2 19.8 H1462.6 M1460.4 18.6 V19.8 M1459.3 20.8 L1462.5 25.5 M1461.7 20.8 L1458.8 24.5" stroke="#8d7f7a" stroke-width="1"/>
</svg>
<div style="left:1597px;top:11px;width:20px;height:20px;border-radius:10px;background:#4dcbe0"></div>
<div style="left:1600px;top:18.6px;width:6px;height:7px;background:#15124a;border-radius:1px 0 0 2px"></div>
<div style="left:1600px;top:18.6px;width:6px;height:1.6px;background:#f4ece6"></div>
<div style="left:1602px;top:18.6px;width:2px;height:1.6px;background:#f25b4a"></div>

<span class="t" style="left:154.59px;top:11px;font-size:14.5px;transform:scaleX(0.9494);color:#1f1f1f;">ncbi.nlm.nih.gov/geo/query/acc.cgi?acc=GSE2034</span>
</body></html>
